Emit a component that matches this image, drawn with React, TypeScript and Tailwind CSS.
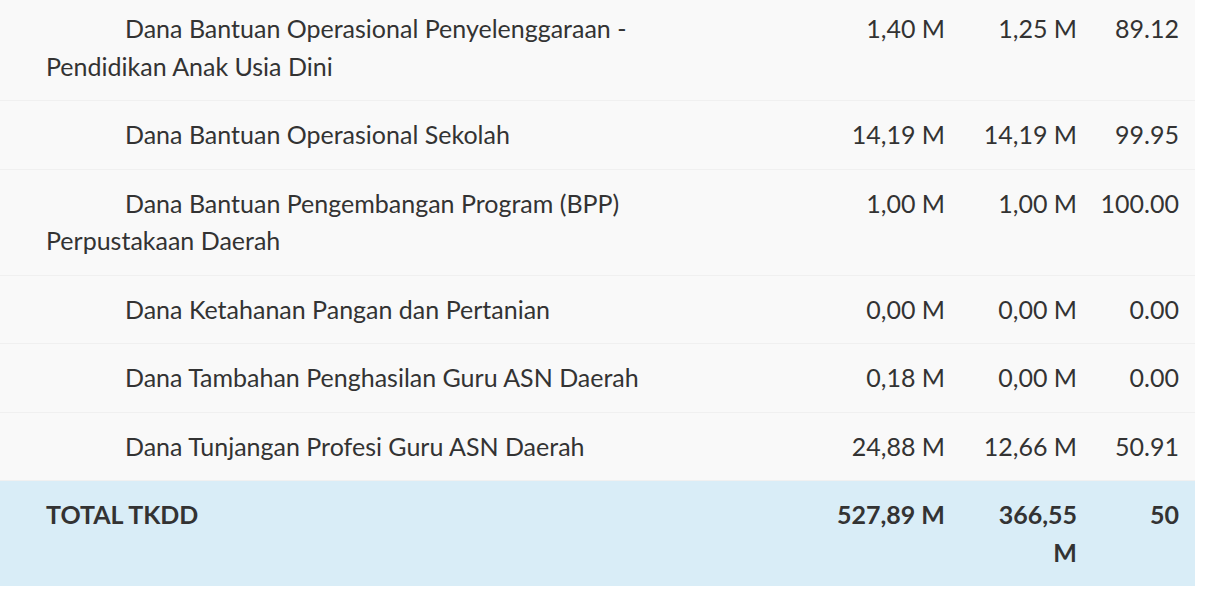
const rows = [
  { name: 'Dana Bantuan Operasional Penyelenggaraan - Pendidikan Anak Usia Dini', pagu: '1,40 M', real: '1,25 M', pct: '89.12' },
  { name: 'Dana Bantuan Operasional Sekolah', pagu: '14,19 M', real: '14,19 M', pct: '99.95' },
  { name: 'Dana Bantuan Pengembangan Program (BPP) Perpustakaan Daerah', pagu: '1,00 M', real: '1,00 M', pct: '100.00' },
  { name: 'Dana Ketahanan Pangan dan Pertanian', pagu: '0,00 M', real: '0,00 M', pct: '0.00' },
  { name: 'Dana Tambahan Penghasilan Guru ASN Daerah', pagu: '0,18 M', real: '0,00 M', pct: '0.00' },
  { name: 'Dana Tunjangan Profesi Guru ASN Daerah', pagu: '24,88 M', real: '12,66 M', pct: '50.91' },
];

const cols = 'grid grid-cols-[740px_221px_132px_102px]';

export default function App() {
  return (
    <div className="w-[1205px] h-[603px] bg-white overflow-hidden font-['Lato',sans-serif] text-[25px] leading-[37.5px] text-[#333]">
      <div className="w-[1195px] -mt-[5px]">
        {rows.map((r) => (
          <div key={r.name} className={`${cols} bg-[#f9f9f9] border-b border-[#f0f0f0]`}>
            <div className="pl-[46px] pr-4 py-[15px] indent-[79px]">{r.name}</div>
            <div className="px-4 py-[15px] text-right">{r.pagu}</div>
            <div className="px-4 py-[15px] text-right">{r.real}</div>
            <div className="pl-1 pr-4 py-[15px] text-right whitespace-nowrap">{r.pct}</div>
          </div>
        ))}
        <div className={`${cols} bg-[#d9edf7] font-bold`}>
          <div className="pl-[46px] pr-4 py-[15px]">TOTAL TKDD</div>
          <div className="px-4 py-[15px] text-right">527,89 M</div>
          <div className="px-4 py-[15px] text-right">366,55 M</div>
          <div className="pl-1 pr-4 py-[15px] text-right">50</div>
        </div>
      </div>
    </div>
  );
}
